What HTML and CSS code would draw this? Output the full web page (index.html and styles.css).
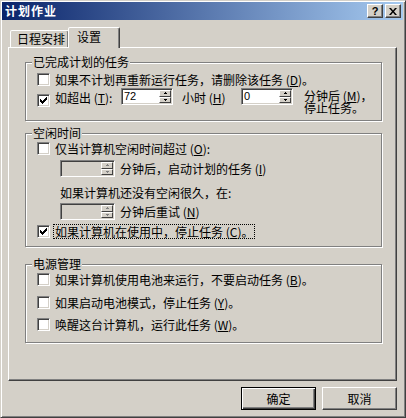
FILE: index.html
```html
<!DOCTYPE html>
<html lang="zh-CN">
<head>
<meta charset="utf-8">
<title>计划作业</title>
<link rel="stylesheet" href="styles.css">
</head>
<body>
<div class="window">
  <div class="titlebar">
    <span class="title">计划作业</span>
    <div class="tbtns">
      <span class="tbtn help">?</span>
      <span class="tbtn close"><svg width="8" height="7" viewBox="0 0 8 7"><path d="M0 0h2l2 2.5l2-2.5h2l-3 3.5l3 3.5h-2l-2-2.5l-2 2.5h-2l3-3.5z" fill="#000"/></svg></span>
    </div>
  </div>
  <div class="body">
    <div class="tabs">
      <div class="tab">日程安排</div>
      <div class="tab active">设置</div>
    </div>
    <div class="panel">
      <div class="group g1">
        <span class="legend">已完成计划的任务</span>
        <div class="row">
          <span class="cb"></span>
          <span class="lbl">如果不计划再重新运行任务，请删除该任务 (<u>D</u>)。</span>
        </div>
        <div class="row row-spin">
          <span class="cb cb-low"><svg class="chk" width="7" height="7" viewBox="0 0 7 7"><path d="M0 2h1v3H0zM1 3h1v3H1zM2 4h1v3H2zM3 3h1v3H3zM4 2h1v3H4zM5 1h1v3H5zM6 0h1v3H6z" fill="#000"/></svg></span>
          <span class="lbl lbl-top w-exceed">如超出 (<u>T</u>):</span>
          <span class="spin"><span class="val">72</span><span class="arrows"><span class="sb up"></span><span class="sb down"></span></span></span>
          <span class="lbl lbl-top w-hour">小时 (<u>H</u>)</span>
          <span class="spin"><span class="val">0</span><span class="arrows"><span class="sb up"></span><span class="sb down"></span></span></span>
          <span class="lbl-two"><span class="ln">分钟后 (<u>M</u>)，</span><span class="ln">停止任务。</span></span>
        </div>
      </div>

      <div class="group g2">
        <span class="legend">空闲时间</span>
        <div class="row">
          <span class="cb"></span>
          <span class="lbl">仅当计算机空闲时间超过 (<u>O</u>):</span>
        </div>
        <div class="row row-indent row-s1">
          <span class="spin spin-sm disabled"><span class="val"></span><span class="arrows"><span class="sb up"></span><span class="sb down"></span></span></span>
          <span class="lbl lbl-after">分钟后，启动计划的任务 (<u>I</u>)</span>
        </div>
        <div class="line-indent">如果计算机还没有空闲很久，在:</div>
        <div class="row row-indent row-s2">
          <span class="spin spin-sm disabled"><span class="val"></span><span class="arrows"><span class="sb up"></span><span class="sb down"></span></span></span>
          <span class="lbl lbl-after">分钟后重试 (<u>N</u>)</span>
        </div>
        <div class="row row-last">
          <span class="cb"><svg class="chk" width="7" height="7" viewBox="0 0 7 7"><path d="M0 2h1v3H0zM1 3h1v3H1zM2 4h1v3H2zM3 3h1v3H3zM4 2h1v3H4zM5 1h1v3H5zM6 0h1v3H6z" fill="#000"/></svg></span>
          <span class="lbl focus">如果计算机在使用中，停止任务 (<u>C</u>)。</span>
        </div>
      </div>

      <div class="group g3">
        <span class="legend">电源管理</span>
        <div class="row">
          <span class="cb"></span>
          <span class="lbl">如果计算机使用电池来运行，不要启动任务 (<u>B</u>)。</span>
        </div>
        <div class="row row-p2">
          <span class="cb"></span>
          <span class="lbl">如果启动电池模式，停止任务 (<u>Y</u>)。</span>
        </div>
        <div class="row row-p3">
          <span class="cb"></span>
          <span class="lbl">唤醒这台计算机，运行此任务 (<u>W</u>)。</span>
        </div>
      </div>
    </div>
    <div class="footer">
      <span class="btn default">确定</span>
      <span class="btn">取消</span>
    </div>
  </div>
</div>
</body>
</html>
```

FILE: styles.css
```css
* { box-sizing: border-box; }
html, body { margin: 0; padding: 0; }
body {
  font-family: "Noto Sans CJK SC", "Noto Sans", sans-serif;
  font-size: 12px;
  color: #000;
  background: #D4D0C8;
}
.window {
  width: 406px;
  height: 418px;
  border: 1px solid;
  border-color: #D4D0C8 #404040 #404040 #D4D0C8;
  box-shadow: inset 1px 1px #fff, inset -1px -1px #808080;
  padding: 1px 2px 2px 1px;
  background: #D4D0C8;
}
.titlebar {
  height: 18px;
  display: flex;
  align-items: center;
  justify-content: space-between;
  background: linear-gradient(to right, #0A246A, #A6CAF0);
  padding: 0 2px 0 3px;
}
.title {
  color: #fff;
  font-weight: bold;
  font-size: 12px;
  letter-spacing: 1px;
  line-height: 18px;
}
.tbtns { display: flex; gap: 2px; }
.tbtn {
  width: 16px;
  height: 14px;
  background: #D4D0C8;
  border: 1px solid;
  border-color: #fff #404040 #404040 #fff;
  box-shadow: inset -1px -1px #808080;
  display: flex;
  align-items: center;
  justify-content: center;
}
.help {
  font-family: "Liberation Sans", sans-serif;
  font-weight: bold;
  font-size: 11px;
  line-height: 12px;
}
.close svg { display: block; }
.body { padding: 7px 6px 0 6px; }
.tabs {
  display: flex;
  align-items: flex-end;
  height: 20px;
  padding-left: 2px;
}
.tab {
  height: 17px;
  width: 59px;
  border: 1px solid;
  border-bottom: none;
  border-color: #fff #404040 transparent #fff;
  box-shadow: inset -1px 0 #808080;
  border-radius: 2px 2px 0 0;
  padding: 1px 0 0 6px;
  line-height: 14px;
  background: #D4D0C8;
}
.tab.active {
  height: 21px;
  width: 52px;
  margin-left: -1px;
  margin-bottom: -1px;
  position: relative;
  z-index: 1;
  padding: 2px 0 0 8px;
}
.panel {
  height: 334px;
  border: 1px solid;
  border-color: #fff #404040 #404040 #fff;
  box-shadow: inset -1px -1px #808080;
  padding: 14px 0 0 16px;
}
.group {
  position: relative;
  width: 357px;
  border: 1px solid #808080;
  box-shadow: 1px 1px #fff, inset 1px 1px #fff;
  padding-left: 11px;
}
.g1 { height: 59px; padding-top: 10px; }
.g2 { height: 114px; margin-top: 12px; padding-top: 8px; }
.g3 { height: 79px; margin-top: 17px; padding-top: 8px; }
.legend {
  position: absolute;
  top: -8px;
  left: 6px;
  padding: 0 1px;
  background: #D4D0C8;
  line-height: 14px;
  white-space: nowrap;
}
.row {
  display: flex;
  align-items: center;
  height: 13px;
}
.lbl {
  line-height: 13px;
  white-space: nowrap;
}
.cb + .lbl { margin-left: 5px; }
.cb {
  flex: none;
  width: 13px;
  height: 13px;
  border: 1px solid;
  border-color: #808080 #fff #fff #808080;
  box-shadow: inset 1px 1px #404040, inset -1px -1px #D4D0C8;
  background: #fff;
  padding: 2px;
}
.chk { display: block; }
.row-spin {
  height: auto;
  align-items: flex-start;
  margin-top: 2px;
}
.cb-low { margin-top: 6px; }
.lbl-top { margin-top: 3px; }
.w-exceed { width: 66px; }
.w-hour { width: 59px; margin-left: 9px; }
.lbl-two {
  display: flex;
  flex-direction: column;
  margin-left: 11px;
  margin-top: 2px;
}
.ln {
  line-height: 12px;
  height: 12px;
  white-space: nowrap;
}
.spin {
  flex: none;
  display: flex;
  width: 52px;
  height: 17px;
  border: 1px solid;
  border-color: #808080 #fff #fff #808080;
  box-shadow: inset 1px 1px #404040, inset -1px -1px #D4D0C8;
  background: #fff;
  padding: 1px;
}
.spin-sm { width: 55px; }
.spin.disabled { background: #D4D0C8; }
.val {
  flex: 1;
  padding-left: 1px;
  line-height: 13px;
  font-family: "Liberation Sans", sans-serif;
  font-size: 11px;
}
.arrows {
  width: 12px;
  display: flex;
  flex-direction: column;
}
.sb {
  flex: 1;
  background: #D4D0C8;
  border: 1px solid;
  border-color: #fff #404040 #404040 #fff;
  display: flex;
  align-items: center;
  justify-content: center;
}
.sb.up { flex: 7; }
.sb.down { flex: 6; }
.sb::after {
  content: "";
  width: 1px;
  height: 1px;
  background: #000;
}
.sb.up::after {
  box-shadow: -1px 1px #000, 0 1px #000, 1px 1px #000;
  margin-top: -1px;
}
.sb.down::after {
  box-shadow: -1px -1px #000, 0 -1px #000, 1px -1px #000;
  margin-top: 1px;
}
.disabled .sb::after { background: #808080; }
.disabled .sb.up::after { box-shadow: -1px 1px #808080, 0 1px #808080, 1px 1px #808080; }
.disabled .sb.down::after { box-shadow: -1px -1px #808080, 0 -1px #808080, 1px -1px #808080; }
.row-indent {
  padding-left: 23px;
  height: 17px;
}
.row-s1 { margin-top: 5px; }
.row-s2 { margin-top: 4px; }
.lbl-after { margin-left: 5px; }
.line-indent {
  padding-left: 23px;
  margin-top: 9px;
  line-height: 13px;
  white-space: nowrap;
}
.row-last { margin-top: 5px; }
.cb + .focus {
  margin-left: 4px;
  padding: 0 1px;
  outline: 1px dotted #000;
}
.row-p2 { margin-top: 10px; }
.row-p3 { margin-top: 9px; }
.footer {
  display: flex;
  justify-content: flex-end;
  gap: 6px;
  margin-top: 6px;
}
.btn {
  width: 75px;
  height: 23px;
  border: 1px solid;
  border-color: #fff #404040 #404040 #fff;
  box-shadow: inset -1px -1px #808080;
  text-align: center;
  line-height: 21px;
}
.btn.default {
  border-color: #000;
  box-shadow: inset 1px 1px #fff, inset -1px -1px #404040, inset -2px -2px #808080;
}
```
